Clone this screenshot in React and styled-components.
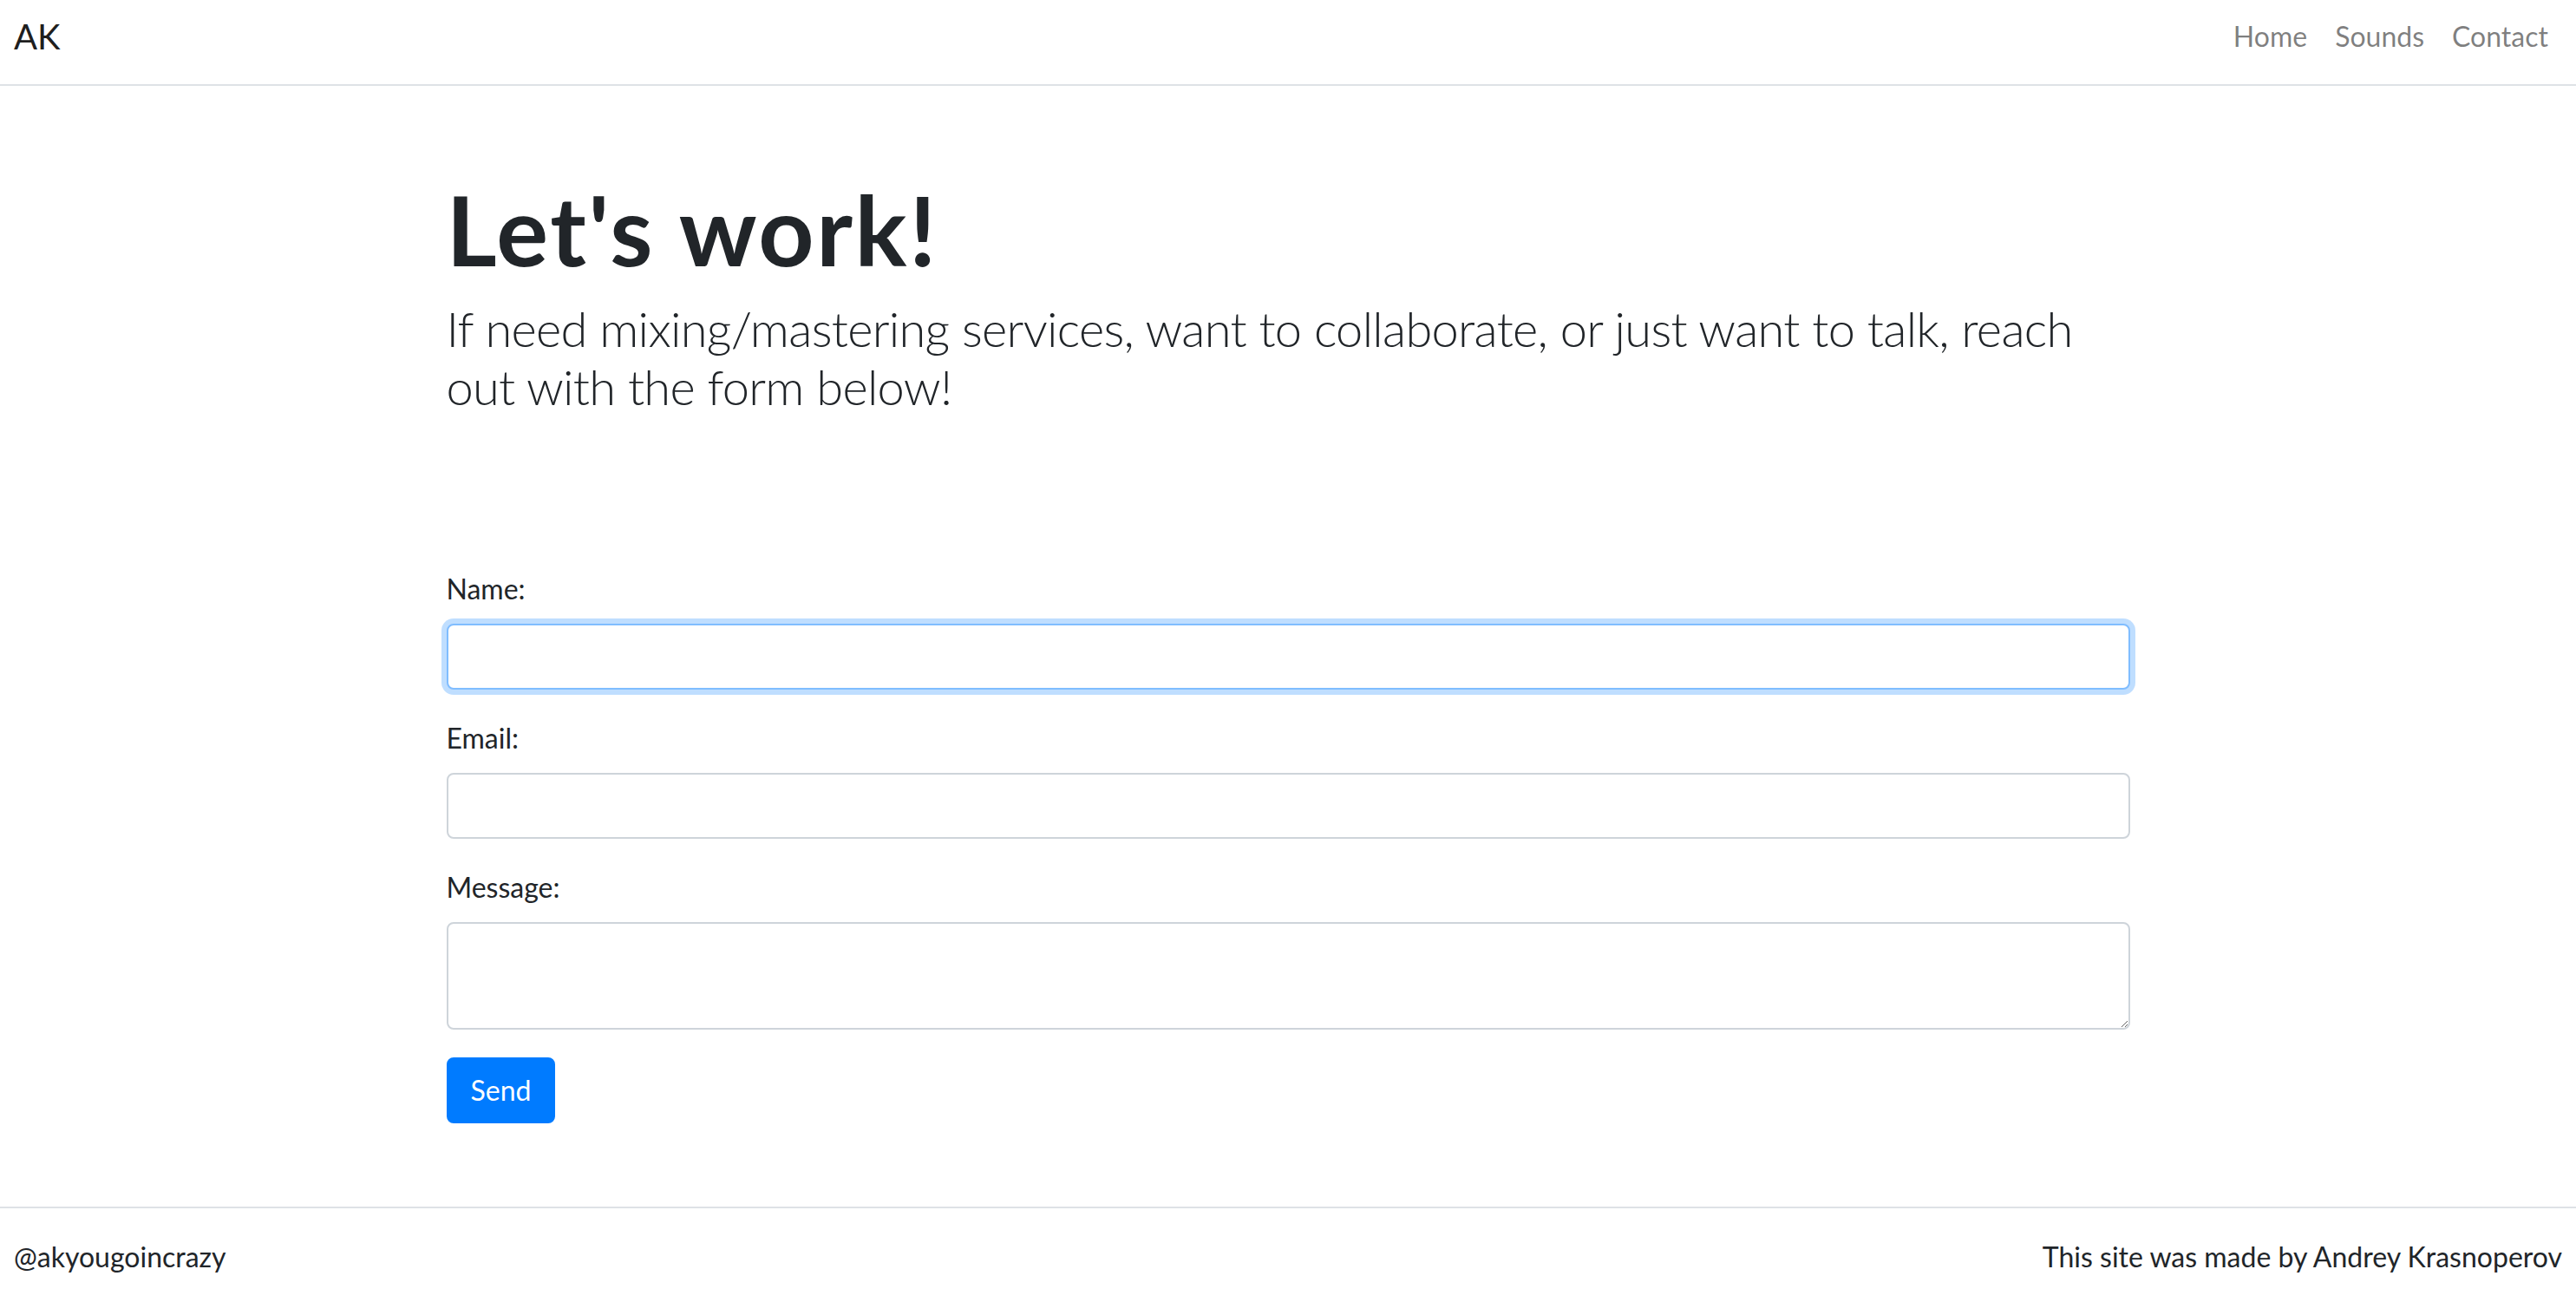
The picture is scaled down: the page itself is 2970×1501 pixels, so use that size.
import styled, { createGlobalStyle } from 'styled-components';

function App() {
  return (
    <>
      <GlobalStyle />
      <Page>
        <NavBar>
          <Brand href="#">AK</Brand>
          <NavLinks>
            <NavLink href="#">Home</NavLink>
            <NavLink href="#">Sounds</NavLink>
            <NavLink href="#">Contact</NavLink>
          </NavLinks>
        </NavBar>
        <Main>
          <Intro>
            <Title>Let's work!</Title>
            <Lead>
              If need mixing/mastering services, want to collaborate, or just want to talk, reach out with the form below!
            </Lead>
          </Intro>
          <Form onSubmit={(e) => e.preventDefault()}>
            <FormGroup>
              <Label htmlFor="name">Name:</Label>
              <Input id="name" type="text" $active autoFocus />
            </FormGroup>
            <FormGroup>
              <Label htmlFor="email">Email:</Label>
              <Input id="email" type="email" />
            </FormGroup>
            <FormGroup>
              <Label htmlFor="message">Message:</Label>
              <TextArea id="message" rows="2" />
            </FormGroup>
            <SendButton type="submit">Send</SendButton>
          </Form>
        </Main>
        <Footer>
          <FooterText>@akyougoincrazy</FooterText>
          <FooterText>This site was made by Andrey Krasnoperov</FooterText>
        </Footer>
      </Page>
    </>
  );
}

export default App;

const GlobalStyle = createGlobalStyle`
  html, body {
    margin: 0;
    padding: 0;
    background: #fff;
  }
  body {
    font-family: Lato, "Noto Sans", "Liberation Sans", sans-serif;
    color: #212529;
  }
  *, *::before, *::after {
    box-sizing: border-box;
  }
`;

const Page = styled.div`
  min-height: 100vh;
  display: flex;
  flex-direction: column;
`;

const NavBar = styled.nav`
  height: 99px;
  padding: 0 16px 14px;
  display: flex;
  align-items: center;
  justify-content: space-between;
  border-bottom: 2px solid #dee2e6;
`;

const Brand = styled.a`
  font-size: 40px;
  line-height: 60px;
  color: rgba(0, 0, 0, 0.9);
  text-decoration: none;
`;

const NavLinks = styled.div`
  display: flex;
  align-items: center;
`;

const NavLink = styled.a`
  padding: 0 16px;
  font-size: 32px;
  line-height: 48px;
  color: rgba(0, 0, 0, 0.5);
  text-decoration: none;
`;

const Main = styled.main`
  flex: 1;
  width: 1941px;
  margin: 0 auto;
  padding-top: 98px;
`;

const Intro = styled.header`
  margin-bottom: 176px;
`;

const Title = styled.h1`
  margin: 0 0 14px;
  font-size: 112px;
  line-height: 134px;
  font-weight: 700;
  letter-spacing: 2.6px;
  color: #212529;
`;

const Lead = styled.p`
  margin: 0;
  font-size: 56px;
  line-height: 67px;
  font-weight: 300;
  letter-spacing: -0.7px;
  color: #212529;
`;

const Form = styled.form`
  display: flex;
  flex-direction: column;
  align-items: flex-start;
`;

const FormGroup = styled.div`
  width: 100%;
  margin-bottom: 32px;
  display: flex;
  flex-direction: column;
`;

const Label = styled.label`
  margin-bottom: 16px;
  font-size: 32px;
  line-height: 48px;
`;

const Input = styled.input`
  width: 100%;
  height: 76px;
  padding: 12px 24px;
  font-family: inherit;
  font-size: 32px;
  line-height: 48px;
  color: #495057;
  caret-color: #495057;
  background: #fff;
  border: 2px solid ${(props) => (props.$active ? '#80bdff' : '#ced4da')};
  border-radius: 8px;
  box-shadow: ${(props) => (props.$active ? '0 0 0 6px rgba(0, 123, 255, 0.25)' : 'none')};
  outline: none;
`;

const TextArea = styled.textarea`
  width: 100%;
  height: 124px;
  padding: 12px 24px;
  font-family: inherit;
  font-size: 32px;
  line-height: 48px;
  color: #495057;
  background: #fff;
  border: 2px solid #ced4da;
  border-radius: 8px;
  resize: vertical;
  outline: none;
`;

const SendButton = styled.button`
  height: 76px;
  padding: 12px 26px;
  font-family: inherit;
  font-size: 32px;
  line-height: 48px;
  color: #fff;
  background: #007bff;
  border: 2px solid #007bff;
  border-radius: 8px;
  cursor: pointer;
`;

const Footer = styled.footer`
  height: 110px;
  padding: 3px 16px 0;
  display: flex;
  align-items: center;
  justify-content: space-between;
  border-top: 2px solid #dee2e6;
`;

const FooterText = styled.span`
  font-size: 32px;
  line-height: 48px;
  color: #212529;
`;
